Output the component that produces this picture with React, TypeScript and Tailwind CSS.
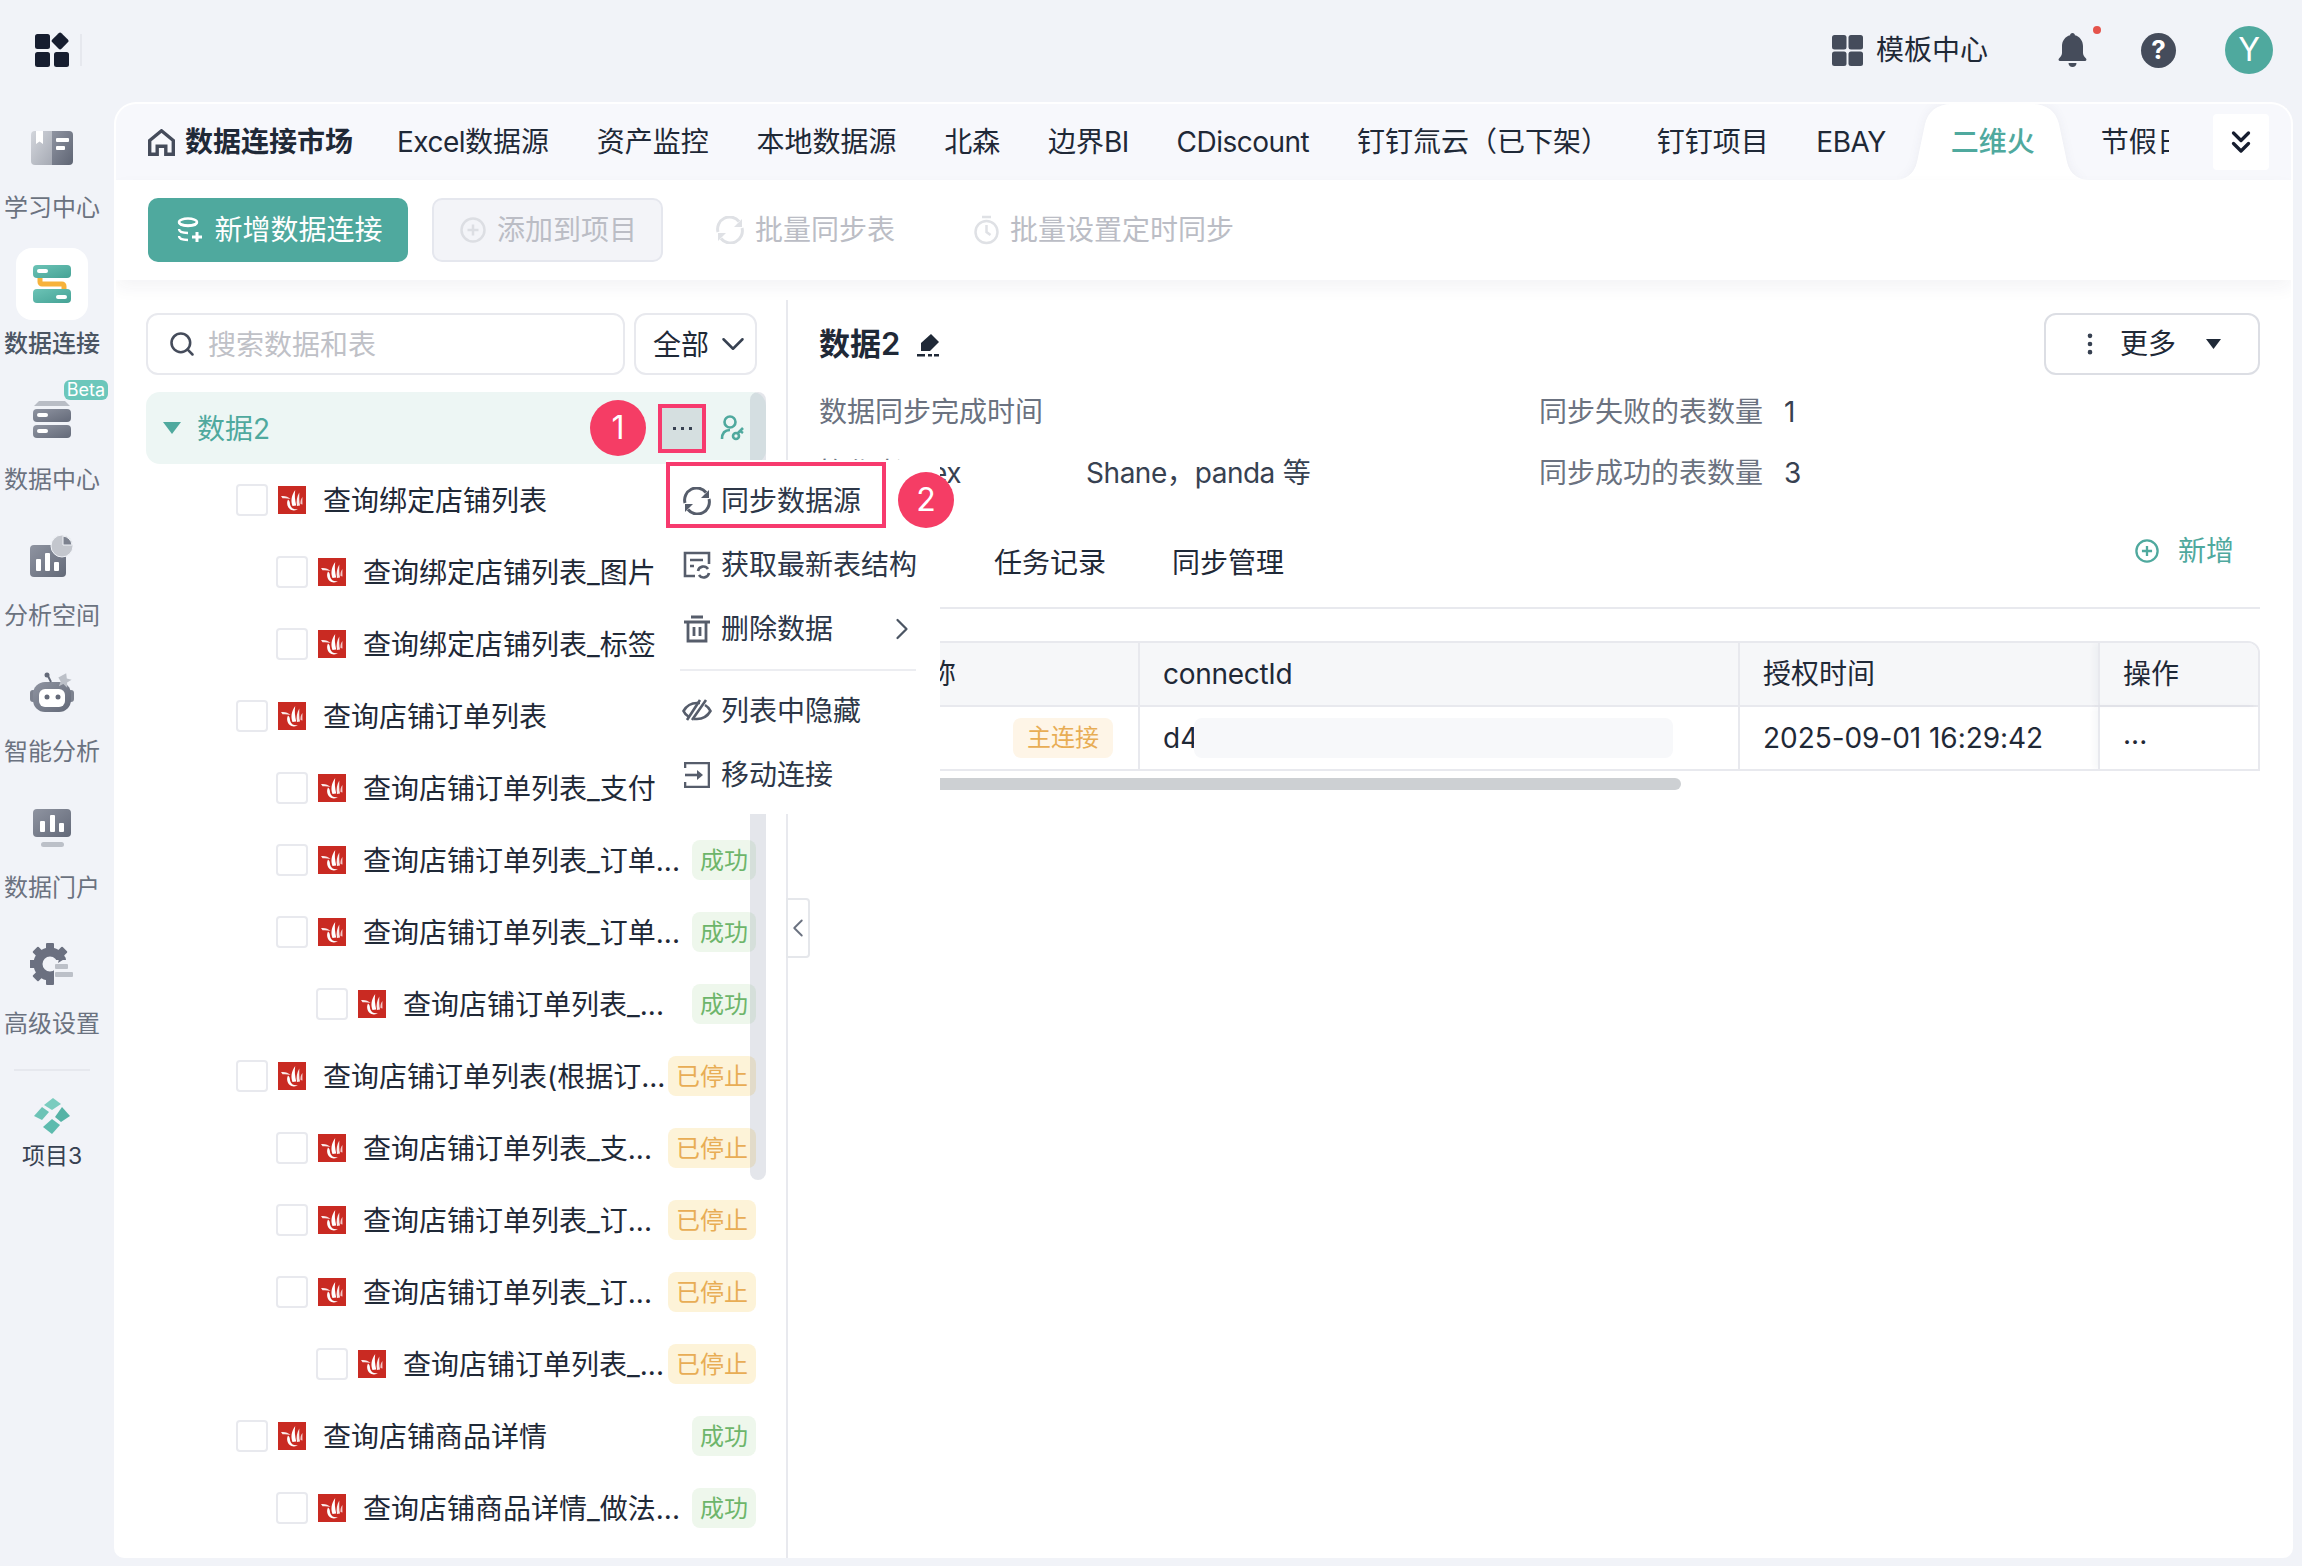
import { ChevronDown, ChevronLeft, ChevronRight, ChevronsDown, EllipsisVertical, Search } from 'lucide-react';

type Row = { level: 1 | 2 | 3; name: string; status?: 'ok' | 'stop' };

function Lat({ children }: { children: React.ReactNode }) {
  return <span className="tracking-[-0.5px]">{children}</span>;
}

const tabs = [
  <>
    <Lat>Excel</Lat>数据源
  </>,
  '资产监控',
  '本地数据源',
  '北森',
  <>
    边界<Lat>BI</Lat>
  </>,
  <Lat>CDiscount</Lat>,
  '钉钉氚云（已下架）',
  '钉钉项目',
  <Lat>EBAY</Lat>,
];

const rows: Row[] = [
  { level: 1, name: '查询绑定店铺列表' },
  { level: 2, name: '查询绑定店铺列表_图片' },
  { level: 2, name: '查询绑定店铺列表_标签' },
  { level: 1, name: '查询店铺订单列表' },
  { level: 2, name: '查询店铺订单列表_支付' },
  { level: 2, name: '查询店铺订单列表_订单...', status: 'ok' },
  { level: 2, name: '查询店铺订单列表_订单...', status: 'ok' },
  { level: 3, name: '查询店铺订单列表_...', status: 'ok' },
  { level: 1, name: '查询店铺订单列表(根据订...', status: 'stop' },
  { level: 2, name: '查询店铺订单列表_支...', status: 'stop' },
  { level: 2, name: '查询店铺订单列表_订...', status: 'stop' },
  { level: 2, name: '查询店铺订单列表_订...', status: 'stop' },
  { level: 3, name: '查询店铺订单列表_...', status: 'stop' },
  { level: 1, name: '查询店铺商品详情', status: 'ok' },
  { level: 2, name: '查询店铺商品详情_做法...', status: 'ok' },
];

const indent = { 1: 'pl-[90px]', 2: 'pl-[130px]', 3: 'pl-[170px]' };

function Grad({ id, from, to }: { id: string; from: string; to: string }) {
  return (
    <linearGradient id={id} x1="0" y1="0" x2="1" y2="1">
      <stop offset="0" stopColor={from} />
      <stop offset="1" stopColor={to} />
    </linearGradient>
  );
}

function BookIcon() {
  return (
    <svg width="42" height="34" viewBox="0 0 42 34">
      <defs>
        <Grad id="bk1" from="#d3d6dc" to="#a6aab4" />
        <Grad id="bk2" from="#8f94a1" to="#5f6574" />
      </defs>
      <path d="M4 0H21V34H4a4 4 0 0 1-4-4V4a4 4 0 0 1 4-4z" fill="url(#bk1)" />
      <path d="M21 0h17a4 4 0 0 1 4 4v26a4 4 0 0 1-4 4H21z" fill="url(#bk2)" />
      <path d="M5 0h7v13l-3.500-2.500L5 13z" fill="#fff" />
      <rect x="25" y="7" width="13" height="4" rx="1" fill="#fff" />
      <rect x="25" y="15" width="9" height="4" rx="1" fill="#fff" />
    </svg>
  );
}

function ConnectIcon() {
  return (
    <svg width="38" height="38" viewBox="0 0 38 38">
      <defs>
        <Grad id="cn1" from="#6cc3b6" to="#44a295" />
      </defs>
      <path d="M7 13v4a2 2 0 0 0 2 2h20a2 2 0 0 1 2 2v3" fill="none" stroke="#f7b23b" strokeWidth="5" />
      <rect width="38" height="13" rx="4" fill="url(#cn1)" />
      <rect y="24" width="38" height="14" rx="4" fill="url(#cn1)" />
      <rect x="4" y="4" width="11" height="4" rx="2" fill="#fff" />
      <rect x="23" y="30" width="11" height="4" rx="2" fill="#fff" />
    </svg>
  );
}

function ServerIcon() {
  return (
    <svg width="38" height="38" viewBox="0 0 38 38">
      <defs>
        <Grad id="sv1" from="#8f94a1" to="#636978" />
      </defs>
      <path d="M6 0h26l5 5H1z" fill="#b9bdc5" />
      <rect y="8" width="38" height="13" rx="4" fill="url(#sv1)" />
      <rect y="24" width="38" height="13" rx="4" fill="url(#sv1)" />
      <rect x="4" y="12" width="11" height="4" rx="2" fill="#fff" />
      <rect x="4" y="28" width="11" height="4" rx="2" fill="#fff" />
    </svg>
  );
}

function AnalysisIcon() {
  return (
    <svg width="44" height="42" viewBox="0 0 44 42">
      <defs>
        <Grad id="an1" from="#8f94a1" to="#636978" />
      </defs>
      <rect y="10" width="36" height="32" rx="4" fill="url(#an1)" />
      <rect x="6" y="24" width="5" height="12" rx="1" fill="#fff" />
      <rect x="15" y="18" width="5" height="18" rx="1" fill="#fff" />
      <rect x="24" y="27" width="5" height="9" rx="1" fill="#fff" />
      <circle cx="32" cy="11" r="11" fill="#c3c6cd" stroke="#f1f3f8" strokeWidth="1" />
      <path d="M33 1v9h9a10 10 0 0 0-9-9z" fill="#7d828f" stroke="#f1f3f8" strokeWidth="1" />
    </svg>
  );
}

function RobotIcon() {
  return (
    <svg width="44" height="40" viewBox="0 0 44 40">
      <defs>
        <Grad id="rb1" from="#8f94a1" to="#636978" />
      </defs>
      <rect x="0" y="18" width="6" height="12" rx="3" fill="#7d828f" />
      <rect x="38" y="18" width="6" height="12" rx="3" fill="#7d828f" />
      <rect x="3" y="10" width="38" height="30" rx="12" fill="url(#rb1)" />
      <rect x="9" y="17" width="26" height="18" rx="6" fill="#fff" />
      <circle cx="17" cy="25" r="2.500" fill="#636978" />
      <circle cx="28" cy="25" r="2.500" fill="#636978" />
      <path d="M21 10 L18 4" stroke="#636978" strokeWidth="2" />
      <circle cx="17" cy="3" r="2.500" fill="#636978" />
      <path d="M37 1l1.500 5 5 .5-4 3.500 1 5-4.500-3-4 3 1-5-3-3.500z" fill="#bcc0c8" transform="translate(-2 0) rotate(10 36 8)" />
    </svg>
  );
}

function PortalIcon() {
  return (
    <svg width="38" height="38" viewBox="0 0 38 38">
      <defs>
        <Grad id="pt1" from="#8f94a1" to="#636978" />
      </defs>
      <rect width="38" height="28" rx="4" fill="url(#pt1)" />
      <rect x="7" y="12" width="5" height="11" rx="1" fill="#fff" />
      <rect x="17" y="6" width="5" height="17" rx="1" fill="#fff" />
      <rect x="26" y="14" width="5" height="9" rx="1" fill="#fff" />
      <rect x="8" y="33" width="23" height="5" rx="2.500" fill="#bcc0c8" />
    </svg>
  );
}

function GearIcon() {
  const teeth = [0, 45, 90, 135, 180, 225, 270, 315];
  return (
    <svg width="44" height="42" viewBox="0 0 44 42">
      <g fill="#6b7080">
        {teeth.map((a) => (
          <rect key={a} x="16" y="0" width="8" height="10" rx="1" transform={`rotate(${a} 20 21)`} />
        ))}
      </g>
      <circle cx="20" cy="21" r="12" fill="none" stroke="#6b7080" strokeWidth="9" />
      <rect x="24" y="17" width="20" height="25" fill="#f1f3f8" />
      <path d="M30 12l6 3-8 5z" fill="#6b7080" />
      <rect x="25" y="21" width="13" height="5" rx="1" fill="#bcc0c8" />
      <rect x="25" y="29" width="18" height="5" rx="1" fill="#bcc0c8" />
    </svg>
  );
}

function ProjectIcon() {
  return (
    <svg width="36" height="36" viewBox="0 0 36 36">
      <path d="M19 0l8 6-9 6-8-5z" fill="#7accbf" />
      <path d="M8 9l7 5-7 8-8-4z" fill="#6cc3b6" />
      <path d="M28 9l8 9-9 6-6-5z" fill="#55b3a6" />
      <path d="M18 21l8 6-8 9-9-7z" fill="#5dbbae" />
    </svg>
  );
}

function SideItem({ label, active, icon }: { label: string; active?: boolean; icon: React.ReactNode }) {
  return (
    <div className="flex h-[136px] w-[104px] flex-col items-center">
      <div
        className={`mt-[24px] flex h-[72px] w-[72px] shrink-0 items-center justify-center rounded-2xl ${active ? 'bg-white' : ''}`}
      >
        {icon}
      </div>
      <span className={`mt-[8px] h-[32px] shrink-0 text-[24px] leading-[32px] whitespace-nowrap ${active ? 'font-medium text-[#4b5563]' : 'text-[#6b7280]'}`}>
        {label}
      </span>
    </div>
  );
}

function FireLogo() {
  return (
    <svg width="28" height="28" viewBox="0 0 28 28" className="shrink-0">
      <rect width="28" height="28" fill="#c92a22" />
      <g fill="#fff">
        <path d="M3 10c4-.5 7 .5 9.500 3-3-1-6-1-8-.7z" opacity=".9" />
        <path d="M10 13.500c-2 3.500-.5 9 3.500 10.500 2.500.8 5 .3 6.500-1-3.500.8-7-.5-7.800-4-.5-2.200 0-4-2.200-5.500z" />
        <path d="M14.500 20c-2-5-1-11 2.700-16 -.8 5-.2 10 1 15.500z" />
        <path d="M19 20c-1-5 0-10 2.300-13.500 0 4.500-.2 9 .7 13z" opacity=".9" />
        <path d="M22.500 18c-.3-2.500.3-5 2-7 0 2.500-.3 5 0 7.500z" opacity=".75" />
      </g>
    </svg>
  );
}

function TreeRow({ row }: { row: Row }) {
  return (
    <div className={`flex h-[72px] items-center pr-[10px] ${indent[row.level]}`}>
      <span className="h-[32px] w-[32px] shrink-0 rounded-[4px] border-2 border-[#e8e9ee] bg-white" />
      <span className="mr-[17px] ml-[10px]">
        <FireLogo />
      </span>
      <span className="flex-1 pt-[1px] text-[28px] leading-[40px] whitespace-nowrap text-[#1f2937]">{row.name}</span>
      {row.status === 'ok' && (
        <span className="flex h-[40px] w-[64px] shrink-0 items-center justify-center rounded-[8px] bg-[#eef7ec] pt-[2px] text-[24px] text-[#6db56a]">
          成功
        </span>
      )}
      {row.status === 'stop' && (
        <span className="flex h-[40px] w-[88px] shrink-0 items-center justify-center rounded-[8px] bg-[#fdf3d8] pt-[2px] text-[24px] text-[#e8ad55]">
          已停止
        </span>
      )}
    </div>
  );
}

function MenuItem({ icon, label, arrow }: { icon: React.ReactNode; label: string; arrow?: boolean }) {
  return (
    <div className="flex h-[64px] items-center pl-[16px] text-[28px] text-[#2d3748]">
      <span className="flex w-[30px] justify-center">{icon}</span>
      <span className="ml-[9px] flex-1 whitespace-nowrap">{label}</span>
      {arrow && <ChevronRight className="mr-[20px] h-[36px] w-[36px] text-[#4b5563]" strokeWidth={1.5} />}
    </div>
  );
}

function SyncIcon({ color = '#565d6b', size = 28 }: { color?: string; size?: number }) {
  return (
    <svg width={size} height={size} viewBox="0 0 28 28" fill="none" stroke={color} strokeWidth="3">
      <path d="M2 16A12 12 0 0 1 23 5.500" />
      <path d="M26 12A12 12 0 0 1 5 22.500" />
      <path d="M26 3v8h-8z" fill={color} stroke="none" />
      <path d="M2 25v-8h8z" fill={color} stroke="none" />
    </svg>
  );
}

function CirclePlus({ color, size = 26 }: { color: string; size?: number }) {
  return (
    <svg width={size} height={size} viewBox="0 0 26 26" fill="none" stroke={color} strokeWidth="2.500">
      <circle cx="13" cy="13" r="11.500" />
      <path d="M13 7.500v11M7.500 13h11" />
    </svg>
  );
}

export default function App() {
  return (
    <div className="flex h-[1566px] w-[2302px] flex-col overflow-hidden bg-[#f1f3f8] font-[Inter,'Noto_Sans_CJK_SC',sans-serif] text-[#1f2937]">
      {/* top bar */}
      <header className="flex h-[102px] shrink-0 items-center pb-[2px]">
        <div className="flex w-[114px] items-center">
          <svg width="36" height="36" viewBox="0 0 36 36" className="ml-[35px]">
            <g fill="#161d2f">
              <rect x="0" y="2" width="15" height="15" rx="2.500" />
              <rect x="0" y="20" width="15" height="15" rx="2.500" />
              <rect x="19" y="20" width="15" height="15" rx="2.500" />
              <rect x="20" y="1" width="13" height="13" rx="2" transform="rotate(45 26.500 7.500) translate(0 2)" />
            </g>
          </svg>
          <span className="ml-[9px] h-[32px] w-[2px] shrink-0 bg-[#e6e8ee]" />
        </div>
        <div className="ml-auto flex items-center">
          <svg width="31" height="31" viewBox="0 0 31 31" fill="#454c5b">
            <rect width="14.500" height="14.500" rx="2.500" />
            <rect x="16.500" width="14.500" height="14.500" rx="2.500" />
            <rect y="16.500" width="14.500" height="14.500" rx="2.500" />
            <rect x="16.500" y="16.500" width="14.500" height="14.500" rx="2.500" />
          </svg>
          <span className="ml-[13px] text-[28px] leading-[40px] text-[#1f2937]">模板中心</span>
          <span className="relative ml-[70px] flex">
            <svg width="29" height="35" viewBox="0 0 29 35" fill="#454c5b">
              <path d="M14.500 0c1.500 0 2.300 1 2.400 2.200C21.800 3.400 25 7.800 25 13v7c0 2 1.500 4 3 5.500.8.800.6 2.500-1 2.500H2c-1.600 0-1.800-1.700-1-2.500C2.500 24 4 22 4 20v-7C4 7.800 7.200 3.400 12.100 2.200 12.200 1 13 0 14.500 0z" />
              <path d="M10.500 30h8c0 2.500-1.800 4-4 4s-4-1.500-4-4z" />
            </svg>
            <span className="absolute top-[-7px] left-[35px] h-[8px] w-[8px] rounded-full bg-[#e5534b]" />
          </span>
          <span className="ml-[54px] flex h-[35px] w-[35px] items-center justify-center rounded-full bg-[#454c5b] text-[26px] leading-none font-bold text-white">
            ?
          </span>
          <span className="mr-[29px] ml-[49px] flex h-[48px] w-[48px] items-center justify-center rounded-full bg-[#4fa99e] text-[32px] leading-none text-white">
            Y
          </span>
        </div>
      </header>

      <div className="flex flex-1">
        {/* sidebar */}
        <aside className="flex w-[114px] shrink-0 flex-col">
          <div className="mt-[-14px]">
            <SideItem label="学习中心" icon={<BookIcon />} />
            <SideItem label="数据连接" active icon={<ConnectIcon />} />
            <div className="relative">
              <SideItem label="数据中心" icon={<ServerIcon />} />
              <span className="absolute top-[20px] left-[64px] flex h-[20px] w-[44px] items-center justify-center rounded-[6px] bg-[#6cc7bb] text-[18px] leading-none text-white">
                Beta
              </span>
            </div>
            <SideItem label="分析空间" icon={<AnalysisIcon />} />
            <SideItem label="智能分析" icon={<RobotIcon />} />
            <SideItem label="数据门户" icon={<PortalIcon />} />
            <SideItem label="高级设置" icon={<GearIcon />} />
          </div>
          <div className="mt-[29px] ml-[14px] h-[2px] w-[76px] bg-[#e6e8ee]" />
          <div className="mt-[27px] flex w-[104px] flex-col items-center">
            <ProjectIcon />
            <span className="mt-[6px] text-[23px] leading-[32px] text-[#374151]">项目3</span>
          </div>
        </aside>

        {/* main card */}
        <main className="relative flex h-[1456px] w-[2179px] flex-col overflow-hidden rounded-tl-[22px] rounded-tr-[22px] rounded-br-[10px] rounded-bl-[10px] border-t-2 border-r-2 border-l-2 border-white bg-white">
          <div className="flex h-[76px] shrink-0 items-center bg-[#f7f8fc]">
            <div className="flex h-full w-[2053px] items-center overflow-hidden pl-[32px]">
              <svg width="27" height="27" viewBox="0 0 27 27" className="shrink-0" fill="none">
                <path d="M1.700 11.500L13.500 1.800l11.800 9.700V25.300h-7.500v-8h-8.600v8H1.700z" stroke="#454c5b" strokeWidth="3.400" />
              </svg>
              <span className="ml-[10px] shrink-0 text-[28px] font-semibold text-[#1f2937]">数据连接市场</span>
              <div className="ml-[44px] flex items-center gap-[47.7px] text-[28px] whitespace-nowrap text-[#1f2937]">
                {tabs.map((t, i) => (
                  <span key={i} className="shrink-0">
                    {t}
                  </span>
                ))}
              </div>
              <div className="relative ml-[65px] flex h-full shrink-0 items-center">
                <svg width="196" height="76" viewBox="0 0 196 76" className="absolute top-0 left-[-57px] drop-shadow-[0_0_5px_rgba(30,40,70,0.06)]">
                  <path d="M0 76C12 76 20 70 23 58L31 20C34 8 42 0 58 0H138C154 0 162 8 165 20L173 58C176 70 184 76 196 76Z" fill="#fff" />
                </svg>
                <span className="relative text-[28px] font-medium whitespace-nowrap text-[#4fa99e]">二维火</span>
              </div>
              <span className="relative ml-[66px] shrink-0 text-[28px] whitespace-nowrap text-[#1f2937]">节假日</span>
            </div>
            <div className="ml-[44px] flex h-[56px] w-[56px] shrink-0 items-center justify-center rounded-[4px] bg-white">
              <ChevronsDown className="h-[36px] w-[36px] text-[#161d2f]" strokeWidth={2.2} />
            </div>
          </div>

          {/* toolbar */}
          <div className="relative z-10 flex h-[100px] shrink-0 items-center bg-white pl-[32px] shadow-[0_8px_16px_rgba(30,40,70,0.05)]">
            <button className="flex h-[64px] w-[260px] items-center justify-center gap-[11px] rounded-[10px] bg-[#4fa99e] pl-[4px] text-[28px] text-white">
              <svg width="26" height="26" viewBox="0 0 26 26" fill="none" stroke="#fff" strokeWidth="2.400">
                <ellipse cx="11" cy="5" rx="9" ry="3.500" />
                <path d="M2 5c0 2 2 4 9 4s9-2 9-4M2 12c0 2.500 4 4 9 4M2 19c0 2.500 4 4 9 4" />
                <path d="M20 15v10M15 20h10" strokeWidth="3" />
              </svg>
              新增数据连接
            </button>
            <button className="ml-[24px] flex h-[64px] w-[231px] items-center justify-center gap-[11px] rounded-[10px] border-2 border-[#e5e7ee] bg-[#f3f4f8] pl-[2px] text-[28px] text-[#bbbdc5]">
              <CirclePlus color="#dcdee3" />
              添加到项目
            </button>
            <span className="ml-[53px] flex items-center gap-[11px] text-[28px] text-[#bbbdc5]">
              <SyncIcon color="#dfe1e5" />
              批量同步表
            </span>
            <span className="ml-[79px] flex items-center gap-[11px] text-[28px] text-[#bbbdc5]">
              <svg width="25" height="30" viewBox="0 0 25 30" fill="none" stroke="#dfe1e5" strokeWidth="2.500">
                <circle cx="12.500" cy="17" r="11" />
                <path d="M8 2h9M12.500 10v7l4 3" />
              </svg>
              批量设置定时同步
            </span>
          </div>

          {/* body */}
          <div className="relative flex min-h-0 flex-1">
            {/* left tree */}
            <section className="mt-[20px] flex w-[672px] shrink-0 flex-col overflow-hidden border-r-2 border-[#e8e9ee] pt-[13px] pl-[30px]">
              <div className="flex w-[611px] gap-[9px]">
                <div className="flex h-[62px] w-[479px] items-center rounded-[12px] border-2 border-[#e8e9ee] pl-[20px]">
                  <Search className="h-[28px] w-[28px] text-[#454c5b]" strokeWidth={2.2} />
                  <span className="ml-[12px] pt-[1px] text-[28px] text-[#bfc1c7]">搜索数据和表</span>
                </div>
                <div className="flex h-[62px] w-[123px] items-center rounded-[12px] border-2 border-[#e8e9ee] pl-[17px]">
                  <span className="pt-[1px] text-[28px] text-[#1f2937]">全部</span>
                  <ChevronDown className="ml-[5px] h-[38px] w-[38px] text-[#374151]" strokeWidth={1.6} />
                </div>
              </div>
              <div className="relative mt-[17px] w-[620px] flex-1 overflow-hidden">
                <div className="flex h-[72px] items-center rounded-[14px] bg-[#edf6f4] pl-[17px]">
                  <svg width="18" height="12" viewBox="0 0 18 12" className="shrink-0">
                    <path d="M0 0h18l-9 12z" fill="#4fa99e" />
                  </svg>
                  <span className="ml-[16px] w-[73px] shrink-0 pt-[1px] text-[28px] whitespace-nowrap text-[#4fa99e]">数据2</span>
                  <span className="ml-[388px] flex h-[49px] w-[48px] shrink-0 items-center justify-center gap-[5px] border-4 border-[#f73a6e] bg-[#d5dfe0]">
                    <span className="h-[3px] w-[3px] bg-[#374151]" />
                    <span className="h-[3px] w-[3px] bg-[#374151]" />
                    <span className="h-[3px] w-[3px] bg-[#374151]" />
                  </span>
                  <svg width="25" height="26" viewBox="0 0 25 26" fill="none" stroke="#4fa99e" strokeWidth="2.600" className="ml-[14px] shrink-0">
                    <circle cx="10" cy="7" r="5.500" />
                    <path d="M2 24c0-6 3-9 8-9" />
                    <circle cx="16" cy="21" r="3" />
                    <path d="M18 18l5-5M20 16l3 2" />
                  </svg>
                </div>
                {rows.map((row, i) => (
                  <TreeRow key={i} row={row} />
                ))}
                <div className="absolute top-0 right-0 h-[788px] w-[16px] rounded-[8px] bg-[#4a5a78]/15" />
                <span className="absolute top-[8px] left-[444px] flex h-[56px] w-[56px] items-center justify-center rounded-full bg-[#f53d65] text-[32px] text-white">
                  1
                </span>
              </div>
            </section>

            {/* popup menu */}
            <div className="absolute top-[180px] left-[550px] z-20 h-[354px] w-[274px] bg-white pt-[9px]">
              <MenuItem icon={<SyncIcon />} label="同步数据源" />
              <MenuItem
                icon={
                  <svg width="28" height="28" viewBox="0 0 28 28" fill="none" stroke="#565d6b" strokeWidth="2.600">
                    <path d="M12 25H2V2h24v11" />
                    <path d="M7 9h13M7 15h4" />
                    <path d="M15 20a5.500 5.500 0 0 1 10-2M26 22a5.500 5.500 0 0 1-10 2" />
                  </svg>
                }
                label="获取最新表结构"
              />
              <MenuItem
                icon={
                  <svg width="26" height="28" viewBox="0 0 26 28" fill="none" stroke="#565d6b" strokeWidth="2.800">
                    <path d="M0 7h26M7 2h12M4 7v19h18V7M10 12v9M16 12v9" />
                  </svg>
                }
                label="删除数据"
                arrow
              />
              <div className="mt-[8px] mb-[8px] ml-[14px] h-[2px] w-[236px] bg-[#ecedf1]" />
              <MenuItem
                icon={
                  <svg width="30" height="24" viewBox="0 0 30 24" fill="none" stroke="#565d6b" strokeWidth="2.600">
                    <path d="M7 18C4.500 16.500 2.500 14.500 1.500 12 5 6 10 4 15 4h3M23 6c2.500 1.500 4.500 3.500 5.500 6-3.500 6-8.500 8-13.500 8h-3" />
                    <path d="M24 1L10 21M18 1L5 21" />
                  </svg>
                }
                label="列表中隐藏"
              />
              <MenuItem
                icon={
                  <svg width="26" height="26" viewBox="0 0 26 26" fill="none" stroke="#565d6b" strokeWidth="2.600">
                    <path d="M1 6V1h24v24H1v-5" />
                    <path d="M1 13h15" />
                    <path d="M13 8l6 5-6 5z" fill="#565d6b" stroke="none" />
                  </svg>
                }
                label="移动连接"
              />
            </div>

            {/* step 2 highlight */}
            <div className="absolute top-[182px] left-[550px] z-30 h-[66px] w-[220px] border-4 border-[#f73a6e]" />
            <span className="absolute top-[192px] left-[782px] z-30 flex h-[56px] w-[56px] items-center justify-center rounded-full bg-[#f53d65] text-[32px] text-white">
              2
            </span>

            {/* collapse handle */}
            <div className="absolute top-[618px] left-[670px] z-10 flex h-[60px] w-[24px] items-center justify-center rounded-r-[4px] border-2 border-[#e5e7eb] bg-white">
              <ChevronLeft className="h-[30px] w-[30px] shrink-0 text-[#6b7280]" strokeWidth={1.5} />
            </div>

            {/* right panel */}
            <section className="flex min-w-0 flex-1 flex-col pt-[33px] pr-[31px] pl-[31px]">
              <div className="flex h-[62px] items-center">
                <h2 className="text-[31px] font-semibold text-[#1f2937]">数据2</h2>
                <svg width="25" height="25" viewBox="0 0 25 25" className="ml-[16px]" fill="#1f2937">
                  <path d="M15 2l8 8-9 9H5v-8z" />
                  <path d="M1 22h8v2.500H1zM12 22h4v2.500h-4zM18 22h5v2.500h-5z" />
                </svg>
                <div className="ml-auto flex h-[62px] w-[216px] items-center rounded-[12px] border-2 border-[#dcdee4] pl-[30px] text-[28px] text-[#1f2937]">
                  <EllipsisVertical className="h-[28px] w-[28px] text-[#374151]" strokeWidth={2} />
                  <span className="ml-[16px]">更多</span>
                  <svg width="15" height="10" viewBox="0 0 15 10" className="ml-[30px]">
                    <path d="M0 0h15l-7.500 10z" fill="#1f2937" />
                  </svg>
                </div>
              </div>
              <div className="mt-[17px] grid grid-cols-[720px_1fr] gap-y-[21px] text-[28px] leading-[40px]">
                <span className="text-[#6b7280]">数据同步完成时间</span>
                <span className="text-[#6b7280]">
                  同步失败的表数量<span className="ml-[21px] text-[#374151]">1</span>
                </span>
                <span className="flex text-[#374151]">
                  <span className="text-[#6b7280]">协作者</span>
                  <span className="ml-[3px]">
                    <Lat>Alex</Lat>
                  </span>
                  <span className="ml-[125px]">
                    <Lat>Shane</Lat>，<Lat>panda</Lat> 等
                  </span>
                </span>
                <span className="text-[#6b7280]">
                  同步成功的表数量<span className="ml-[21px] text-[#374151]">3</span>
                </span>
              </div>
              <div className="mt-[26px] flex h-[90px] items-start justify-between border-b-2 border-[#e8e9ee]">
                <div className="mt-[24px] ml-[-3px] flex gap-[66px] text-[28px] leading-[40px] text-[#1f2937]">
                  <span>数据表格</span>
                  <span>任务记录</span>
                  <span>同步管理</span>
                </div>
                <div className="mt-[12px] mr-[26px] flex items-center gap-[19px] text-[28px] leading-[40px] text-[#4fa99e]">
                  <CirclePlus color="#4fa99e" size={24} />
                  新增
                </div>
              </div>

              {/* table */}
              <div className="mt-[32px] overflow-hidden rounded-t-[12px] border-2 border-[#e8e9ee] text-[28px] text-[#1f2937]">
                <div className="flex h-[64px] items-center border-b-2 border-[#e8e9ee] bg-[#f6f7f9]">
                  <span className="flex h-full w-[317px] items-center pl-[23px]">连接名称</span>
                  <span className="flex h-full w-[600px] items-center border-l-2 border-[#e8e9ee] pl-[23px] tracking-[-0.3px]">connectId</span>
                  <span className="flex h-full w-[360px] items-center border-l-2 border-[#e8e9ee] pl-[23px]">授权时间</span>
                  <span className="flex h-full flex-1 items-center border-l-2 border-[#e8e9ee] pl-[23px] shadow-[-4px_0_6px_rgba(30,40,70,0.04)]">操作</span>
                </div>
                <div className="flex h-[62px] items-center">
                  <span className="flex h-full w-[317px] items-center justify-end pr-[25px]">
                    <span className="flex h-[40px] w-[100px] items-center justify-center rounded-[8px] bg-[#fef5e7] text-[24px] text-[#e8ad55]">
                      主连接
                    </span>
                  </span>
                  <span className="flex h-full w-[600px] items-center border-l-2 border-[#e8e9ee] pl-[23px]">
                    d4
                    <span className="ml-[-4px] h-[40px] w-[479px] rounded-[8px] bg-[#f7f8fa]" />
                  </span>
                  <span className="flex h-full w-[360px] items-center border-l-2 border-[#e8e9ee] pl-[23px] tracking-[-0.05px]">2025-09-01 16:29:42</span>
                  <span className="flex h-full flex-1 items-center border-l-2 border-[#e8e9ee] pb-[8px] pl-[23px] shadow-[-4px_0_6px_rgba(30,40,70,0.04)]">...</span>
                </div>
              </div>
              <div className="mt-[7px] h-[12px] w-[862px] rounded-[6px] bg-[#cdd0d3]" />
            </section>
          </div>
        </main>
      </div>
    </div>
  );
}
